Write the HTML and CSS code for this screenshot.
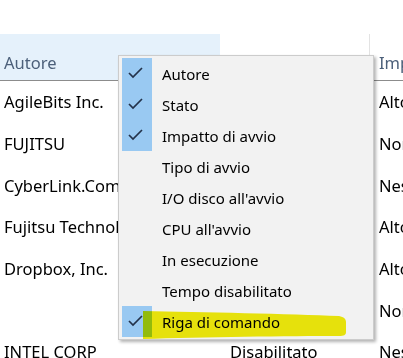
FILE: index.html
```html
<!DOCTYPE html>
<html lang="it">
<head>
  <meta charset="UTF-8">
  <title>Avvio</title>
  <link rel="stylesheet" href="styles.css">
</head>
<body>
  <div class="table">
    <div class="row head">
      <div class="c1 hover">Autore</div>
      <div class="c2"></div>
      <div class="c3">Impatto all'avvio</div>
    </div>
    <div class="row"><div class="c1">AgileBits Inc.</div><div class="c2">Abilitato</div><div class="c3">Alto</div></div>
    <div class="row"><div class="c1">FUJITSU</div><div class="c2">Abilitato</div><div class="c3">Non misurato</div></div>
    <div class="row"><div class="c1">CyberLink.Com</div><div class="c2">Abilitato</div><div class="c3">Nessuno</div></div>
    <div class="row"><div class="c1">Fujitsu Technology Solutions</div><div class="c2">Abilitato</div><div class="c3">Alto</div></div>
    <div class="row"><div class="c1">Dropbox, Inc.</div><div class="c2">Abilitato</div><div class="c3">Alto</div></div>
    <div class="row"><div class="c1"></div><div class="c2">Abilitato</div><div class="c3">Non misurato</div></div>
    <div class="row"><div class="c1">INTEL CORP</div><div class="c2">Disabilitato</div><div class="c3">Nessuno</div></div>
  </div>

  <div class="menu">
    <div class="item on"><span class="check"><svg width="30" height="31"><polyline points="7,15 11,19 20,10" /></svg></span>Autore</div>
    <div class="item on"><span class="check"><svg width="30" height="31"><polyline points="7,15 11,19 20,10" /></svg></span>Stato</div>
    <div class="item on"><span class="check"><svg width="30" height="31"><polyline points="7,15 11,19 20,10" /></svg></span>Impatto di avvio</div>
    <div class="item"><span class="check"></span>Tipo di avvio</div>
    <div class="item"><span class="check"></span>I/O disco all'avvio</div>
    <div class="item"><span class="check"></span>CPU all'avvio</div>
    <div class="item"><span class="check"></span>In esecuzione</div>
    <div class="item"><span class="check"></span>Tempo disabilitato</div>
    <div class="item on"><span class="check"><svg width="30" height="31"><polyline points="7,15 11,19 20,10" /></svg></span>Riga di comando</div>
  </div>

  <svg class="marker" width="210" height="34" viewBox="0 0 210 34">
    <path d="M2 3 C60 4 150 6 198 8 C203 9 205 11 205 14 L205 24 C205 27 203 28 198 28 C150 28 60 29 2 31 Z" />
  </svg>
</body>
</html>
```

FILE: styles.css
```css
* { box-sizing: border-box; }
body { margin: 0; background: #fff; color: #000; font-family: "Noto Sans", "Open Sans", sans-serif; font-size: 16.5px; overflow: hidden; }

.table { padding-top: 34px; }
.row { display: flex; height: 41.7px; align-items: center; white-space: nowrap; }
.row > div { overflow: hidden; }
.c1 { width: 220px; padding-left: 4px; }
.c2 { width: 150px; padding-left: 10px; }
.c3 { flex: 1; padding-left: 9px; }

.head { height: 47px; align-items: stretch; border-bottom: 1px solid #8c8c8c; color: #4c607a; }
.head > div { padding-top: 17px; }
.head .hover { background: #e5f1fb; }
.head .c2 { border-right: 1px solid #e3e3e3; }

.menu { position: absolute; left: 118px; top: 55px; width: 256px; padding: 2px 3px; background: #f2f2f2; border: 1px solid #cccccc; box-shadow: 2px 2px 3px rgba(0, 0, 0, 0.3); font-size: 15px; }
.item { display: flex; align-items: center; height: 31px; white-space: nowrap; }
.check { width: 30px; height: 31px; margin-right: 10px; flex: none; }
.item.on .check { background: #99c9f2; }
.check svg { display: block; }
.check polyline { fill: none; stroke: #23324a; stroke-width: 1.7; }

.marker { position: absolute; left: 141px; top: 308px; mix-blend-mode: multiply; }
.marker path { fill: #f3ee0c; }
```
